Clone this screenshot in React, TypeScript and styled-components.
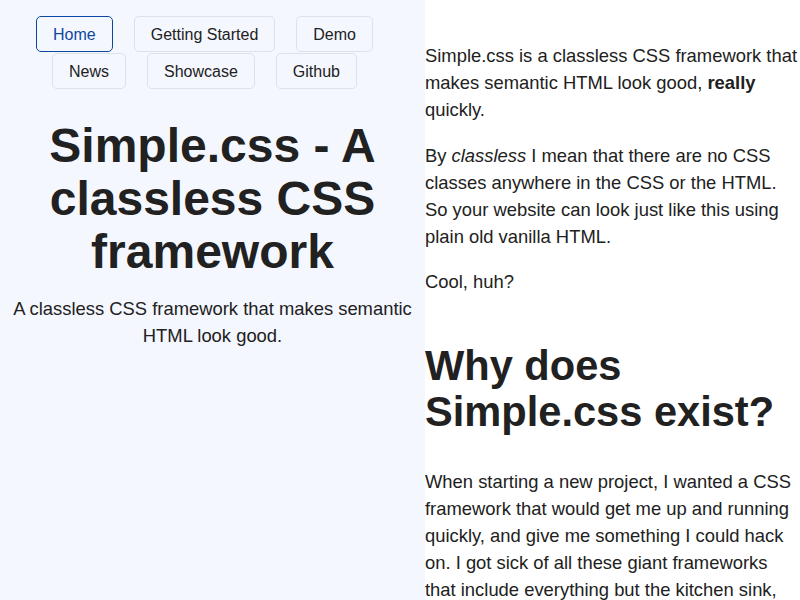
import React from "react";
import styled, { createGlobalStyle } from "styled-components";

const GlobalStyle = createGlobalStyle`
  html, body {
    margin: 0;
    padding: 0;
  }
  body {
    font-family: "Liberation Sans", Arial, Helvetica, sans-serif;
    color: #212121;
    background: #ffffff;
    font-size: 18.4px;
    line-height: 27px;
  }
`;

const Page = styled.div`
  display: grid;
  grid-template-columns: 425px 375px;
  min-height: 100vh;
`;

const Header = styled.header`
  background: #f5f7ff;
  padding-top: 16px;
  text-align: center;
`;

const Nav = styled.nav`
  display: flex;
  flex-wrap: wrap;
  justify-content: center;
  column-gap: 5px;
  row-gap: 1px;
`;

const NavLink = styled.a<{ $active?: boolean }>`
  display: block;
  margin-right: 16px;
  padding: 6px 16px 4px;
  font-size: 16px;
  line-height: 24px;
  border: 1px solid ${(p) => (p.$active ? "#0d47a1" : "#dde1ea")};
  border-radius: 5px;
  color: ${(p) => (p.$active ? "#0d47a1" : "#212121")};
  text-decoration: none;
`;

const Title = styled.h1`
  font-size: 48px;
  line-height: 1.1;
  font-weight: 700;
  margin: 31px 0 17px;
`;

const Tagline = styled.p`
  margin: 0;
`;

const Main = styled.main`
  padding-top: 24px;
`;

const Para = styled.p`
  margin: 18.4px 0;
`;

const Heading = styled.h2`
  font-size: 41.6px;
  line-height: 1.1;
  font-weight: 700;
  margin: 48px 0 33.5px;
`;

const links = [
  { label: "Home", active: true },
  { label: "Getting Started" },
  { label: "Demo" },
  { label: "News" },
  { label: "Showcase" },
  { label: "Github" },
];

export default function App() {
  return (
    <>
      <GlobalStyle />
      <Page>
        <Header>
          <Nav>
            {links.map((l) => (
              <NavLink key={l.label} href="#" $active={l.active}>
                {l.label}
              </NavLink>
            ))}
          </Nav>
          <Title>Simple.css - A classless CSS framework</Title>
          <Tagline>A classless CSS framework that makes semantic HTML look good.</Tagline>
        </Header>
        <Main>
          <Para>
            Simple.css is a classless CSS framework that makes semantic HTML look good, <strong>really</strong> quickly.
          </Para>
          <Para>
            By <em>classless</em> I mean that there are no CSS classes anywhere in the CSS or the HTML. So your website can look just like this using plain old vanilla HTML.
          </Para>
          <Para>Cool, huh?</Para>
          <Heading>Why does Simple.css exist?</Heading>
          <Para>
            When starting a new project, I wanted a CSS framework that would get me up and running quickly, and give me something I could hack on. I got sick of all these giant frameworks that include everything but the kitchen sink, and then you spend more time removing things than actually building.
          </Para>
        </Main>
      </Page>
    </>
  );
}
